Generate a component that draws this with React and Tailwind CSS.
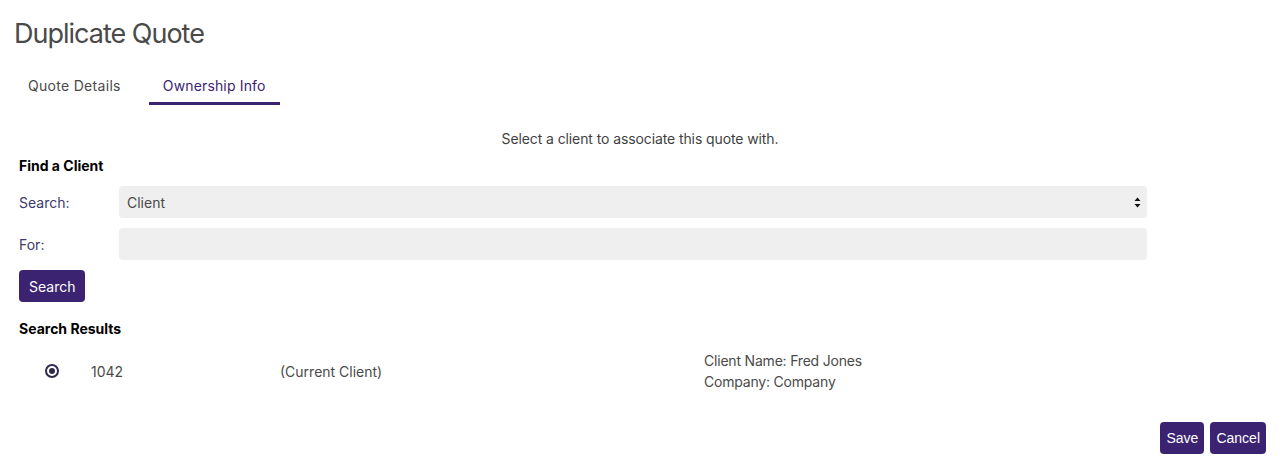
import React from "react";

export default function App() {
  const font = { fontFamily: "Inter, 'Noto Sans', sans-serif" };
  return (
    <div className="w-[1280px] h-[469px] bg-white text-[14px] text-[#3f3f3f]" style={font}>
      <div className="px-[14px] pt-[16px]">
        <h1 className="text-[27px] leading-[36px] text-[#4a4a4a] font-normal tracking-[-1px]">Duplicate Quote</h1>
        <div className="flex gap-[14px] mt-[23px]">
          <div className="px-[14px] h-[30px] flex items-start text-[#4a4a4a] tracking-[0.3px]">Quote Details</div>
          <div className="px-[14px] h-[30px] flex items-start text-[#3b2372] border-b-[3px] border-[#3b2372] tracking-[0.15px]">Ownership Info</div>
        </div>
      </div>
      <div className="text-center mt-[23px] text-[#3f3f3f] tracking-[-0.1px]">Select a client to associate this quote with.</div>
      <div className="px-[19px]">
        <div className="font-bold text-black mt-[7px] leading-[20px]">Find a Client</div>
        <div className="flex items-center mt-[10px] w-[1128px]">
          <div className="w-[100px] text-[#3d3a6e]">Search:</div>
          <div className="flex-1 h-[32px] bg-[#efefef] rounded-[4px] flex items-center justify-between pl-[8px] pr-[6px] text-[#4a4a4a]">
            <span>Client</span>
            <svg width="7" height="11" viewBox="0 0 7 11"><path d="M3.5 0.5 L6.5 4 H0.5 Z" fill="#111" /><path d="M3.5 10.5 L6.5 7 H0.5 Z" fill="#111" /></svg>
          </div>
        </div>
        <div className="flex items-center mt-[10px] w-[1128px]">
          <div className="w-[100px] text-[#3d3a6e]">For:</div>
          <div className="flex-1 h-[32px] bg-[#efefef] rounded-[4px]"></div>
        </div>
        <button className="mt-[10px] h-[32px] px-[10px] bg-[#3b2372] text-white rounded-[4px]">Search</button>
        <div className="font-bold text-black mt-[17px] leading-[20px]">Search Results</div>
        <div className="flex items-center mt-[11px] w-[1128px] text-[#4a4a4a]">
          <div className="w-[66px] flex justify-center">
            <div className="w-[14px] h-[14px] rounded-full border-[2px] border-[#2e2a4e] flex items-center justify-center">
              <div className="w-[6px] h-[6px] rounded-full bg-[#2e2a4e]"></div>
            </div>
          </div>
          <div className="w-[189px] pl-[6px]">1042</div>
          <div className="w-[424px] pl-[6px]">(Current Client)</div>
          <div className="pl-[6px] leading-[21px] tracking-[-0.2px]">
            <div>Client Name: Fred Jones</div>
            <div>Company: Company</div>
          </div>
        </div>
      </div>
      <div className="flex justify-end gap-[6px] pr-[14px] mt-[30px]" style={{ fontFamily: "'Liberation Sans', Arial, sans-serif" }}>
        <button className="h-[32px] px-[6px] bg-[#3b2372] text-white rounded-[4px]">Save</button>
        <button className="h-[32px] px-[6px] bg-[#3b2372] text-white rounded-[4px]">Cancel</button>
      </div>
    </div>
  );
}
